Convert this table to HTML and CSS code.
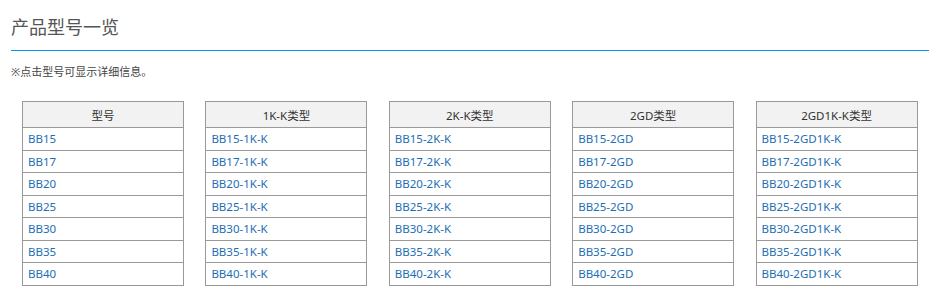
FILE: index.html
```html
<!DOCTYPE html>
<html lang="zh-CN">
<head>
  <meta charset="UTF-8">
  <meta name="viewport" content="width=device-width, initial-scale=1.0">
  <title>产品型号一览</title>
  <link rel="stylesheet" href="styles.css">
</head>
<body>
  <div class="container">
    <!-- Section Title -->
    <h2 class="section-title">产品型号一览</h2>

    <p class="note">※点击型号可显示详细信息。</p>

    <!-- Model Tables -->
    <div class="model-list">
      <table class="model-table">
        <tr><th>型号</th></tr>
        <tr><td><a href="#">BB15</a></td></tr>
        <tr><td><a href="#">BB17</a></td></tr>
        <tr><td><a href="#">BB20</a></td></tr>
        <tr><td><a href="#">BB25</a></td></tr>
        <tr><td><a href="#">BB30</a></td></tr>
        <tr><td><a href="#">BB35</a></td></tr>
        <tr><td><a href="#">BB40</a></td></tr>
      </table>

      <table class="model-table">
        <tr><th>1K-K类型</th></tr>
        <tr><td><a href="#">BB15-1K-K</a></td></tr>
        <tr><td><a href="#">BB17-1K-K</a></td></tr>
        <tr><td><a href="#">BB20-1K-K</a></td></tr>
        <tr><td><a href="#">BB25-1K-K</a></td></tr>
        <tr><td><a href="#">BB30-1K-K</a></td></tr>
        <tr><td><a href="#">BB35-1K-K</a></td></tr>
        <tr><td><a href="#">BB40-1K-K</a></td></tr>
      </table>

      <table class="model-table">
        <tr><th>2K-K类型</th></tr>
        <tr><td><a href="#">BB15-2K-K</a></td></tr>
        <tr><td><a href="#">BB17-2K-K</a></td></tr>
        <tr><td><a href="#">BB20-2K-K</a></td></tr>
        <tr><td><a href="#">BB25-2K-K</a></td></tr>
        <tr><td><a href="#">BB30-2K-K</a></td></tr>
        <tr><td><a href="#">BB35-2K-K</a></td></tr>
        <tr><td><a href="#">BB40-2K-K</a></td></tr>
      </table>

      <table class="model-table">
        <tr><th>2GD类型</th></tr>
        <tr><td><a href="#">BB15-2GD</a></td></tr>
        <tr><td><a href="#">BB17-2GD</a></td></tr>
        <tr><td><a href="#">BB20-2GD</a></td></tr>
        <tr><td><a href="#">BB25-2GD</a></td></tr>
        <tr><td><a href="#">BB30-2GD</a></td></tr>
        <tr><td><a href="#">BB35-2GD</a></td></tr>
        <tr><td><a href="#">BB40-2GD</a></td></tr>
      </table>

      <table class="model-table">
        <tr><th>2GD1K-K类型</th></tr>
        <tr><td><a href="#">BB15-2GD1K-K</a></td></tr>
        <tr><td><a href="#">BB17-2GD1K-K</a></td></tr>
        <tr><td><a href="#">BB20-2GD1K-K</a></td></tr>
        <tr><td><a href="#">BB25-2GD1K-K</a></td></tr>
        <tr><td><a href="#">BB30-2GD1K-K</a></td></tr>
        <tr><td><a href="#">BB35-2GD1K-K</a></td></tr>
        <tr><td><a href="#">BB40-2GD1K-K</a></td></tr>
      </table>
    </div>
  </div>
</body>
</html>
```

FILE: styles.css
```css
body {
  font-family: "Noto Sans", "Noto Sans CJK SC", sans-serif;
  margin: 0;
  padding: 0;
  background-color: #ffffff;
  color: #333;
}

.container {
  width: 918px;
  margin: 0 0 0 11px;
  padding-top: 14px;
}

/* Title with blue rule underneath */
.section-title {
  font-size: 18px;
  font-weight: normal;
  line-height: 26px;
  color: #555;
  margin: 0;
  padding-bottom: 10px;
  border-bottom: 1px solid #0099ee;
}

.note {
  font-size: 11px;
  line-height: 16px;
  color: #444;
  margin: 13px 0 0 0;
}

.model-list {
  display: flex;
  gap: 21.4px;
  margin: 21px 0 0 11px;
}

.model-table {
  width: 162px;
  border-collapse: collapse;
  font-size: 11.5px;
}

.model-table th,
.model-table td {
  border: 1px solid #999;
}

.model-table th {
  height: 25px;
  padding: 0;
  font-weight: normal;
  background-color: #f2f2f2;
  color: #333;
  text-align: center;
}

.model-table td {
  height: 21.5px;
  padding: 0 5px;
  text-align: left;
}

.model-table a {
  color: #1e6eb4;
  text-decoration: none;
}
```
